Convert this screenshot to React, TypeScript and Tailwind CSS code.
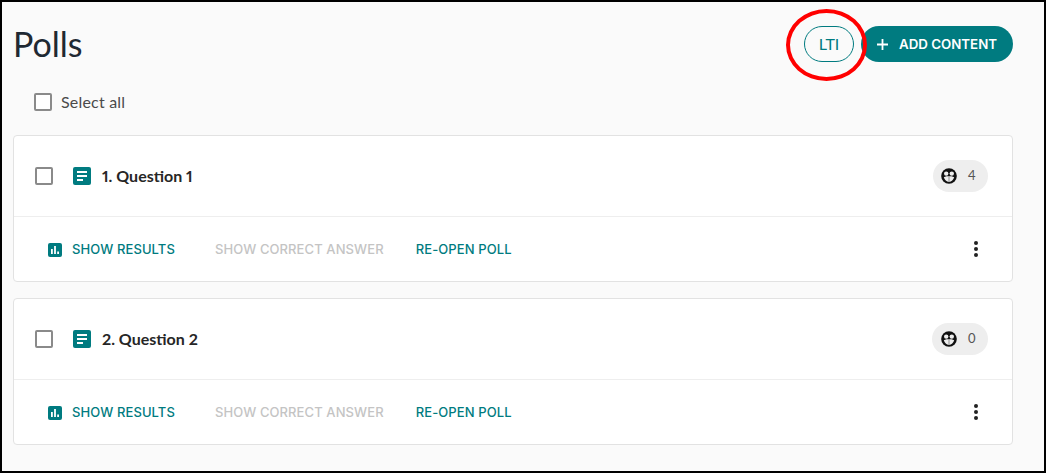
const TEAL = "#007b80";

function Checkbox() {
  return <span className="block h-[18px] w-[18px] shrink-0 rounded-[2px] border-2 border-[#8a8a8a] bg-white" />;
}

function QuestionIcon() {
  return (
    <svg width="18" height="18" viewBox="0 0 18 18" className="shrink-0" aria-hidden="true">
      <rect width="18" height="18" rx="2" fill={TEAL} />
      <rect x="4" y="4" width="10" height="2" fill="#fff" />
      <rect x="4" y="8" width="10" height="2" fill="#fff" />
      <rect x="4" y="12" width="6" height="2" fill="#fff" />
    </svg>
  );
}

function ResultsIcon() {
  return (
    <svg width="14" height="14" viewBox="0 0 14 14" className="shrink-0" aria-hidden="true">
      <rect width="14" height="14" rx="2" fill={TEAL} />
      <rect x="3" y="6" width="1.8" height="5" fill="#fff" />
      <rect x="6.1" y="3" width="1.8" height="8" fill="#fff" />
      <rect x="9.2" y="8.5" width="1.8" height="2.5" fill="#fff" />
    </svg>
  );
}

function ParticipantIcon() {
  return (
    <svg width="16" height="16" viewBox="0 0 16 16" className="shrink-0" aria-hidden="true">
      <circle cx="8" cy="8" r="7.8" fill="#111" />
      <circle cx="5.2" cy="5.6" r="2.2" fill="#eee" />
      <circle cx="10.8" cy="5.6" r="2.2" fill="#eee" />
      <path d="M2.8 9.2c1.6-.9 3.6-.9 5.2-.9s3.6 0 5.2.9c-.8 2.6-2.7 4.6-5.2 4.8-2.5-.2-4.4-2.2-5.2-4.8z" fill="#eee" />
      <rect x="7.6" y="8.3" width="0.8" height="5.7" fill="#777" />
    </svg>
  );
}

function PollCard({ title, count }: { title: string; count: number }) {
  return (
    <section className="h-[147px] rounded-[4px] border border-[#e2e2e2] bg-white">
      <div className="flex h-[81px] items-center border-b border-[#eeeeee] pl-[21px] pr-6">
        <Checkbox />
        <span className="ml-[20px]"><QuestionIcon /></span>
        <h3 className="ml-[11px] font-['Lato',sans-serif] text-[16px] font-bold text-[#262626] proportional-nums">{title}</h3>
        <span className={`ml-auto flex h-[32px] items-center rounded-full bg-[#eeeeee] font-['Lato',sans-serif] text-[13px] text-[#555] ${count > 0 ? "w-[55px] pl-2" : "w-[56px] pl-[9px]"}`}>
          <ParticipantIcon />
          <span className="ml-[11px]">{count}</span>
        </span>
      </div>
      <div className="flex h-[64px] items-center pl-[34px] pr-[34px] pt-px font-['Inter',sans-serif] text-[13px] font-medium tracking-[0.1px]">
        <ResultsIcon />
        <span className="ml-[10px] text-[#007b80]">SHOW RESULTS</span>
        <span className="ml-[40px] text-[#c4c4c4]">SHOW CORRECT ANSWER</span>
        <span className="ml-[32px] text-[#007b80]">RE-OPEN POLL</span>
        <span className="mb-[2px] ml-auto flex flex-col gap-[2px]">
          <i className="block h-[4px] w-[4px] rounded-full bg-[#222]" />
          <i className="block h-[4px] w-[4px] rounded-full bg-[#222]" />
          <i className="block h-[4px] w-[4px] rounded-full bg-[#222]" />
        </span>
      </div>
    </section>
  );
}

export default function App() {
  return (
    <div className="relative h-[473px] w-[1046px] overflow-hidden border-2 border-black bg-[#fafafa] font-['Lato',sans-serif]">
      <div className="pl-[11px] pr-[31px]">
        {/* Header */}
        <header className="flex h-[66px] items-end justify-between">
          <h2 className="pb-[4px] text-[34px] leading-[40px] font-normal text-[#1f2933]">Polls</h2>
          <div className="flex items-center gap-[7px] pb-[6px]">
            <button className="h-[36px] w-[50px] rounded-full border border-[#007b80] text-[16px] text-[#007b80]">LTI</button>
            <button className="flex h-[36px] w-[152px] items-center rounded-full bg-[#007b80] pl-4 font-['Inter',sans-serif] text-[13.3px] font-semibold text-white">
              <svg width="11" height="11" viewBox="0 0 11 11" className="mr-[11px] shrink-0" aria-hidden="true">
                <path d="M5.5 0v11M0 5.5h11" stroke="#fff" strokeWidth="1.8" />
              </svg>
              <span className="pt-px">ADD CONTENT</span>
            </button>
          </div>
        </header>

        <div className="mt-4 flex h-[36px] items-center pl-[21px] text-[16px] tracking-[0.2px] text-[#4a4a4a]">
          <Checkbox />
          <span className="ml-[9px]">Select all</span>
        </div>

        <div className="mt-[15px] flex flex-col gap-[16px]">
          <PollCard title="1. Question 1" count={4} />
          <PollCard title="2. Question 2" count={0} />
        </div>
      </div>

      {/* Red annotation circled over the LTI button */}
      <span className="absolute left-[784px] top-[7px] h-[72px] w-[81px] rounded-[50%] border-[4px] border-[#ff0000]" />
    </div>
  );
}
